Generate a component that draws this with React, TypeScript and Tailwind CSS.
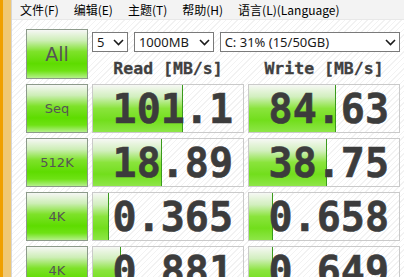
import React from "react";

const MENU = ["文件(F)", "编辑(E)", "主题(T)", "帮助(H)", "语言(L)(Language)"];

const ROWS = [
  { label: "Seq", read: "101.1", readBar: 90, write: "84.63", writeBar: 87 },
  { label: "512K", read: "18.89", readBar: 69, write: "38.75", writeBar: 78 },
  { label: "4K", read: "0.365", readBar: 16, write: "0.658", writeBar: 24 },
  { label: "4K", read: "0.881", readBar: 28, write: "0.649", writeBar: 24 },
];

const stripes =
  "bg-[repeating-linear-gradient(135deg,#ffffff_0px,#ffffff_3px,#f2f2f2_3px,#f2f2f2_4px)]";

function GreenButton({ label, big }: { label: string; big?: boolean }) {
  return (
    <div
      className={`flex h-full w-full items-center justify-center border border-[#8c9a8a] bg-[linear-gradient(to_bottom,#f6f7f5_0%,#cdeeb6_22%,#7ee22a_45%,#5edc00_70%,#6ee214_85%,#b4f08a_100%)] text-[#555555] ${
        big ? "text-[19px]" : "text-[13px]"
      }`}
      style={{ fontFamily: "'DejaVu Sans', sans-serif" }}
    >
      {label}
    </div>
  );
}

function Chevron() {
  return (
    <svg width="11" height="7" viewBox="0 0 11 7" className="shrink-0">
      <polyline points="1,1 5.5,5.5 10,1" fill="none" stroke="#1a1a1a" strokeWidth="1.6" />
    </svg>
  );
}

function Select({ text, w }: { text: string; w: string }) {
  return (
    <div
      className={`flex h-[20px] items-center justify-between border border-[#7a7a7a] bg-white pl-[4px] pr-[3px] text-[13px] text-[#1a1a1a] ${w}`}
      style={{ fontFamily: "'Noto Sans', sans-serif" }}
    >
      <span className="leading-none">{text}</span>
      <Chevron />
    </div>
  );
}

function Cell({ value, bar }: { value: string; bar: number }) {
  return (
    <div className={`relative flex h-[49px] items-center justify-end overflow-hidden border border-[#cacaca] pr-[10px] ${stripes}`}>
      <div
        className="absolute left-0 top-0 bottom-0 border-r border-[#3a9a1c] bg-[linear-gradient(to_bottom,#f6f8f4_0%,#d2efbe_25%,#8ae43c_50%,#72de1c_75%,#8ee648_100%)]"
        style={{ width: bar }}
      />
      <span
        className="relative text-[40px] font-bold leading-none text-[#3c3c3c] [-webkit-text-stroke:0.6px_#3c3c3c]"
        style={{ fontFamily: "'DejaVu Sans Mono', monospace" }}
      >
        {value}
      </span>
    </div>
  );
}

export default function App() {
  return (
    <div className="flex h-[277px] w-[404px] overflow-hidden bg-white">
      {/* window frame edge */}
      <div className="w-[3px] shrink-0 bg-[#f0a000]" />
      <div className="w-[8px] shrink-0 bg-[#f0c874]" />
      <div className="w-px shrink-0 bg-[#d6d6d6]" />

      <div className="flex min-w-0 flex-1 flex-col">
        {/* Menu bar */}
        <div
          className="flex h-[20px] shrink-0 items-center gap-[15px] border-b border-[#e8e8e8] bg-[#f3f3f3] pl-[8px] text-[12px] text-black"
          style={{ fontFamily: "'Noto Sans CJK SC', 'Noto Sans', sans-serif" }}
        >
          {MENU.map((m) => (
            <span key={m} className="leading-none">
              {m}
            </span>
          ))}
        </div>

        <div className={`flex-1 pl-[14px] pt-[9px] ${stripes}`}>
          <div className="grid grid-cols-[62px_152px_152px] gap-x-[4px]">
            <div className="h-[50px]">
              <GreenButton label="All" big />
            </div>
            <div className="col-span-2 flex h-[50px] flex-col pt-[3px]">
              <div className="flex gap-[6px]">
                <Select text="5" w="w-[36px]" />
                <Select text="1000MB" w="w-[80px]" />
                <Select text="C: 31% (15/50GB)" w="w-[181px]" />
              </div>
              <div
                className="grid flex-1 grid-cols-2 items-center gap-x-[4px] text-center text-[16.5px] font-bold text-[#404040] [-webkit-text-stroke:0.3px_#404040]"
                style={{ fontFamily: "'DejaVu Sans Mono', monospace" }}
              >
                <span className="pt-[5px]">Read [MB/s]</span>
                <span className="pt-[5px]">Write [MB/s]</span>
              </div>
            </div>
          </div>

          <div className="mt-[5px] grid grid-cols-[62px_152px_152px] gap-x-[4px] gap-y-[5px]">
            {ROWS.map((r, i) => (
              <React.Fragment key={i}>
                <div className="h-[49px]">
                  <GreenButton label={r.label} />
                </div>
                <Cell value={r.read} bar={r.readBar} />
                <Cell value={r.write} bar={r.writeBar} />
              </React.Fragment>
            ))}
          </div>
        </div>
      </div>
    </div>
  );
}
